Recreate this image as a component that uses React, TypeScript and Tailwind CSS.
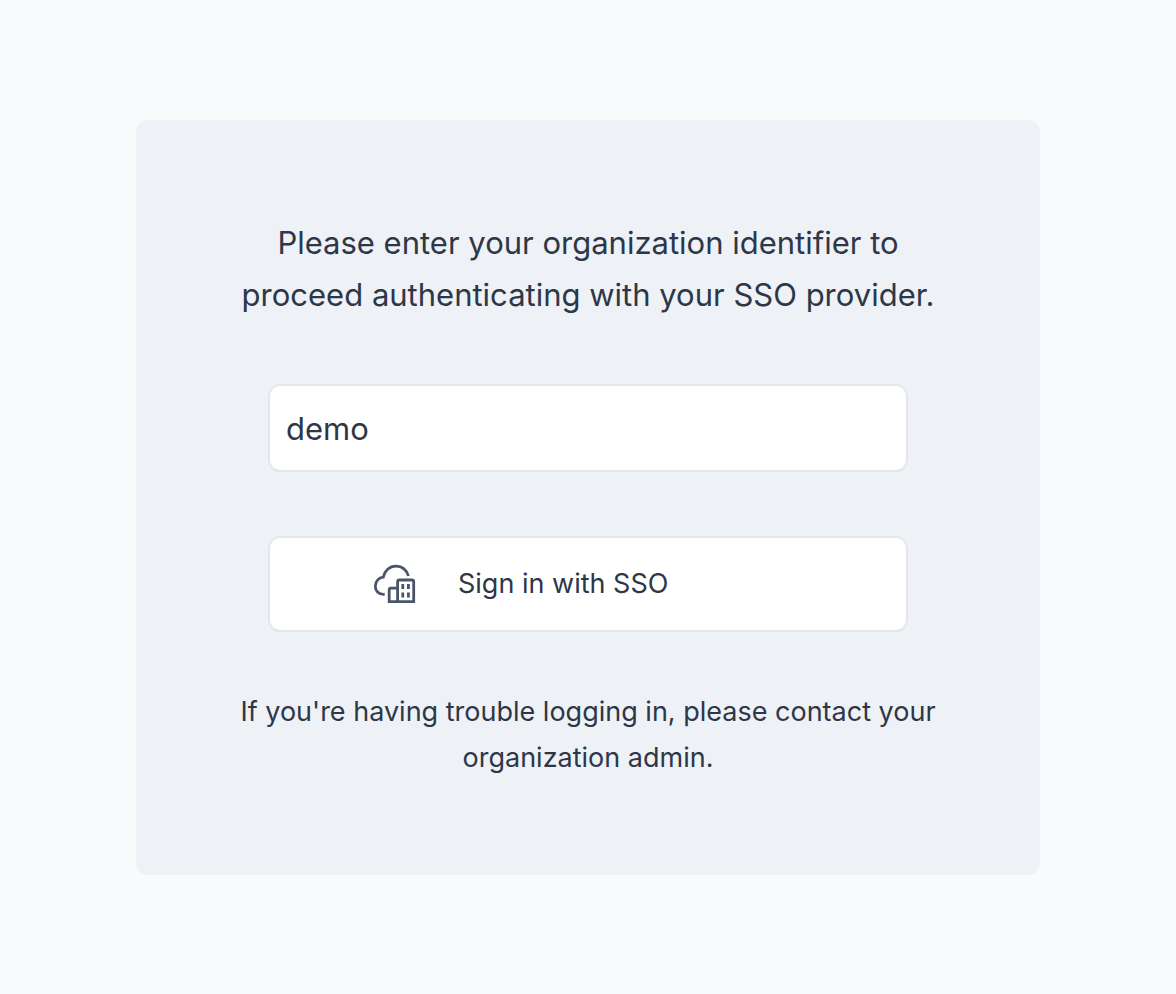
export default function App() {
  return (
    <main className="flex min-h-screen items-start justify-center bg-[#f9fafc] px-8 pt-[120px] pb-16 text-[#2d3748] font-['Inter',sans-serif]">
      <form className="flex w-full max-w-[904px] flex-col items-center rounded-xl bg-[#eef1f6] px-16 pt-[97px] pb-[94px]" onSubmit={(e) => e.preventDefault()}>
        <label htmlFor="organization" className="max-w-[720px] text-center text-[31px] leading-[52px]">
          Please enter your organization identifier to proceed authenticating with your SSO provider.
        </label>
        <input id="organization" defaultValue="demo" className="mt-[63px] h-[88px] w-full max-w-[640px] rounded-xl border-2 border-[#e4e6eb] bg-white px-4 text-[31px] outline-none" />
        <button type="submit" className="mt-16 flex h-24 w-full max-w-[640px] items-center rounded-xl border-2 border-[#e4e6eb] bg-white pl-[102px] text-[27px]">
          <svg aria-hidden="true" viewBox="0 0 48 48" className="mr-[38px] size-12 text-[#4a5568]" fill="none" stroke="currentColor" strokeWidth="2.8">
            <path d="M12.7 34.4H11.5C6.6 34.4 3.3 30.7 3.3 26.2C3.3 21.4 6.6 17.6 11.2 17.2C12.6 10.6 17.5 6.1 23.9 6.1C30.2 6.1 35 10.2 36.4 16" />
            <path d="M25.6 41.6V21.7C25.6 20.7 26.3 20 27.3 20H40C41 20 41.7 20.7 41.7 21.7V41.6Z" />
            <path d="M25.6 28.1H18.9C17.9 28.1 17.2 28.8 17.2 29.8V41.6H25.6" />
            <path d="M30.8 24V29M36.4 24V29M30.8 32.4V37.4M36.4 32.4V37.4" />
          </svg>
          Sign in with SSO
        </button>
        <p className="mt-[57px] max-w-[720px] text-center text-[27px] leading-[46px]">
          If you're having trouble logging in, please contact your organization admin.
        </p>
      </form>
    </main>
  );
}
